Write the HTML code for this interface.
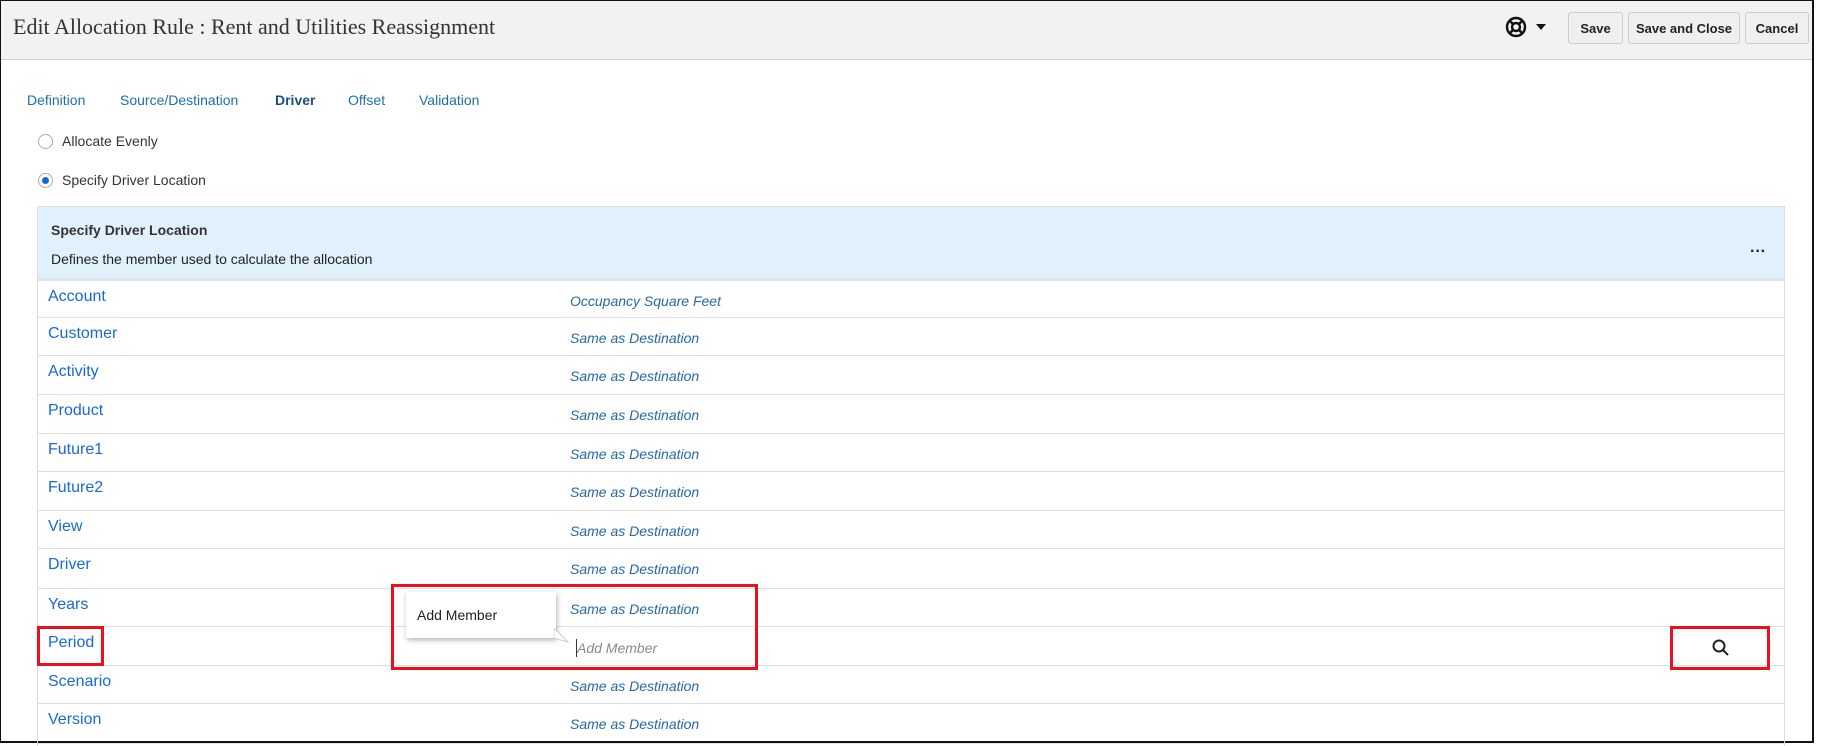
<!DOCTYPE html>
<html><head><meta charset="utf-8"><style>
*{box-sizing:border-box;margin:0;padding:0}
body{width:1821px;height:743px;background:#fff;font-family:"Liberation Sans",sans-serif;position:relative;overflow:hidden}
.frame{position:absolute;left:0;top:0;width:1814px;height:743px;border:2px solid #111;border-left-width:1px}
.hdr{position:absolute;left:1px;top:1px;width:1811px;height:59px;background:#f2f2f2;border-bottom:1px solid #ccc}
.title{position:absolute;left:12px;top:13px;font-family:"Liberation Serif",serif;font-size:22px;color:#333}
.btn{position:absolute;top:11px;height:32px;border:1px solid #ccc;border-radius:3px;background:#efefef;font-size:13px;font-weight:bold;color:#222;display:flex;align-items:center;justify-content:center}
.tab{position:absolute;top:92px;font-size:14px;color:#1d6fa8}
.radio{position:absolute;left:38px;width:15px;height:15px;border:1px solid #aaa;border-radius:50%;background:#fff}
.rl{position:absolute;left:62px;font-size:14px;color:#333}
.panel{position:absolute;left:37px;top:206px;width:1748px;height:540px;border-left:1px solid #ddd;border-right:1px solid #ddd}
.ph{position:absolute;left:0;top:0;width:100%;height:75px;background:#e1f1fc;border-top:1px solid #d6e4ee;border-bottom:3px solid #e3e3e3}
.row{position:absolute;left:0;width:100%;border-bottom:1px solid #e0e0e0}
.lbl{position:absolute;left:10px;top:7px;font-size:16px;color:#1868d6}
.val{position:absolute;left:532px;top:12px;font-size:14px;font-style:italic;color:#2468a9}
.red{position:absolute;border:3px solid #e8121f}
</style></head><body>
<div class="frame"></div>
<div class="hdr">
<div class="title">Edit Allocation Rule : Rent and Utilities Reassignment</div>
<svg style="position:absolute;left:1503px;top:14px" width="24" height="24" viewBox="0 0 24 24" fill="none" stroke="#111" stroke-width="2.4"><circle cx="12" cy="12" r="9"/><circle cx="12" cy="12" r="4"/><path d="M5.5 5.5l3.5 3.5M18.5 5.5l-3.5 3.5M5.5 18.5l3.5-3.5M18.5 18.5l-3.5-3.5"/></svg>
<svg style="position:absolute;left:1535px;top:23px" width="10" height="7"><path d="M0 0h10L5 6z" fill="#111"/></svg>
<div class="btn" style="left:1567px;width:55px">Save</div>
<div class="btn" style="left:1627px;width:112px">Save and Close</div>
<div class="btn" style="left:1744px;width:64px">Cancel</div>
</div>
<div class="tab" style="left:27px">Definition</div>
<div class="tab" style="left:120px">Source/Destination</div>
<div class="tab" style="left:275px;font-weight:bold;color:#1b4f7e">Driver</div>
<div class="tab" style="left:348px">Offset</div>
<div class="tab" style="left:419px">Validation</div>
<div class="radio" style="top:134px"></div><div class="rl" style="top:133px">Allocate Evenly</div>
<div class="radio" style="top:173px"><div style="position:absolute;left:3px;top:3px;width:7px;height:7px;border-radius:50%;background:#0b6fc9"></div></div><div class="rl" style="top:172px">Specify Driver Location</div>
<div class="panel">
<div class="ph">
<div style="position:absolute;left:13px;top:15px;font-size:14px;font-weight:bold;color:#333">Specify Driver Location</div>
<div style="position:absolute;left:13px;top:44px;font-size:14px;color:#222">Defines the member used to calculate the allocation</div>
<div style="position:absolute;right:18px;top:36px;font-size:16px;font-weight:bold;color:#222">···</div>
</div>
<div class="row" style="top:75px;height:37px"><div class="lbl">Account</div><div class="val">Occupancy Square Feet</div></div>
<div class="row" style="top:112px;height:38px"><div class="lbl">Customer</div><div class="val">Same as Destination</div></div>
<div class="row" style="top:150px;height:39px"><div class="lbl">Activity</div><div class="val">Same as Destination</div></div>
<div class="row" style="top:189px;height:39px"><div class="lbl">Product</div><div class="val">Same as Destination</div></div>
<div class="row" style="top:228px;height:38px"><div class="lbl">Future1</div><div class="val">Same as Destination</div></div>
<div class="row" style="top:266px;height:39px"><div class="lbl">Future2</div><div class="val">Same as Destination</div></div>
<div class="row" style="top:305px;height:38px"><div class="lbl">View</div><div class="val">Same as Destination</div></div>
<div class="row" style="top:343px;height:40px"><div class="lbl">Driver</div><div class="val">Same as Destination</div></div>
<div class="row" style="top:383px;height:38px"><div class="lbl">Years</div><div class="val">Same as Destination</div></div>
<div class="row" style="top:421px;height:39px"><div class="lbl">Period</div><div class="val" style="color:#888;left:539px;top:13px">Add Member</div><div style="position:absolute;left:538px;top:12px;width:1px;height:18px;background:#333"></div>
<svg style="position:absolute;left:1674px;top:12px" width="18" height="18" viewBox="0 0 18 18" fill="none" stroke="#222" stroke-width="2"><circle cx="7" cy="7" r="5.5"/><path d="M11 11l5 5"/></svg></div>
<div class="row" style="top:460px;height:38px"><div class="lbl">Scenario</div><div class="val">Same as Destination</div></div>
<div class="row" style="top:498px;height:40px"><div class="lbl">Version</div><div class="val">Same as Destination</div></div>
</div>
<div style="position:absolute;left:406px;top:592px;width:150px;height:46px;background:#fff;box-shadow:1px 2px 5px rgba(0,0,0,.3)"><div style="position:absolute;left:11px;top:15px;font-size:14px;color:#222">Add Member</div></div>
<svg style="position:absolute;left:554px;top:628px" width="16" height="16"><path d="M0 0L14 14L0 10z" fill="#fff" stroke="#ccc"/></svg>
<div class="red" style="left:37px;top:626px;width:67px;height:40px"></div>
<div class="red" style="left:391px;top:584px;width:367px;height:86px"></div>
<div class="red" style="left:1670px;top:626px;width:100px;height:44px"></div>
</body></html>
